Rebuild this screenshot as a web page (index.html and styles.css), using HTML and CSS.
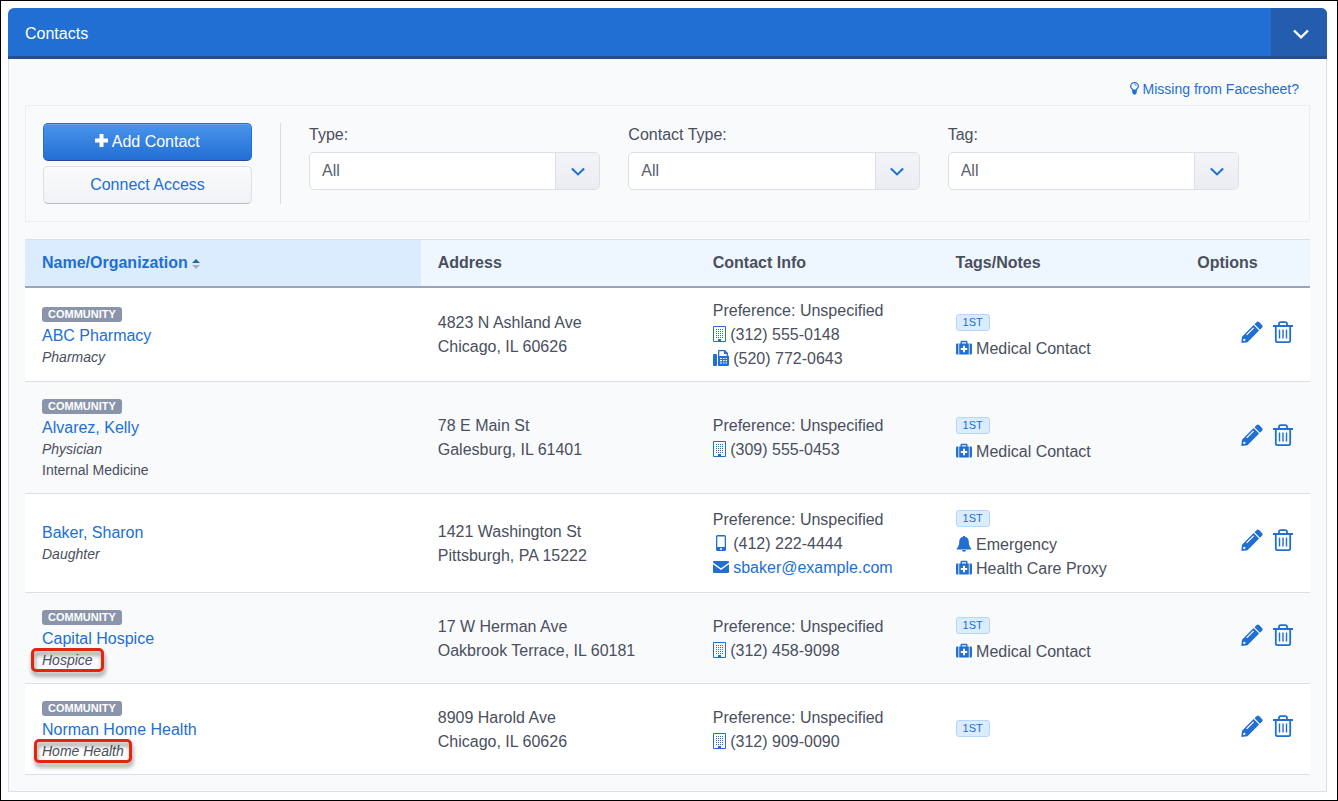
FILE: index.html
```html
<!DOCTYPE html>
<html lang="en">
  <head>
    <meta charset="utf-8" />
    <meta name="viewport" content="width=device-width, initial-scale=1.0" />
    <title>Contacts</title>
    <link rel="stylesheet" href="styles.css">
  </head>

  <body>
    <!-- icon set -->
    <svg class="sprite" aria-hidden="true">
      <symbol id="chevron" viewBox="0 0 16 10">
        <path d="M1 1.500 8 8.300l7-6.800" fill="none" stroke="currentColor" stroke-width="2.400" />
      </symbol>
      <symbol id="plus" viewBox="0 0 13 13">
        <path d="M4.500 0h4v4.500H13v4H8.500V13h-4V8.500H0v-4h4.500z" fill="currentColor" />
      </symbol>
      <symbol id="bulb" viewBox="0 0 9 13">
        <path d="M3 8.500C3 7 .6 6.400.6 4.300a3.900 3.700 0 0 1 7.800 0C8.400 6.400 6 7 6 8.500z" fill="none" stroke="currentColor" stroke-width="1.200" />
        <path d="M2.300 7.500h4.400v3.500l-1.200 1.500h-2l-1.200-1.500z" fill="currentColor" />
        <path d="M4.500 2.400c1 0 1.800.6 1.800 1.600" fill="none" stroke="currentColor" stroke-width=".8" />
      </symbol>
      <symbol id="building" viewBox="0 0 13 16">
        <path d="M.5.500h12v15H.5z" fill="none" stroke="currentColor" />
        <path d="M3 3.500h8M3 5.500h8M3 7.500h8M3 9.500h8M3 11.500h8" stroke="currentColor" stroke-dasharray="1 1" />
        <path d="M5 13h3v3H5z" fill="currentColor" />
      </symbol>
      <symbol id="fax" viewBox="0 0 16 16">
        <path d="M0 5a1 1 0 0 1 1-1h2a1 1 0 0 1 1 1v10a1 1 0 0 1-1 1H1a1 1 0 0 1-1-1z" fill="currentColor" />
        <path fill-rule="evenodd" d="M5 1a1 1 0 0 1 1-1h6l3 3v2.500a1.500 1.500 0 0 1 1 1.500v7.500a1.500 1.500 0 0 1-1.500 1.500H5zm1.300.300V6h7.400V4H11V1.300z" fill="currentColor" />
        <path d="M7 8.500h2M10 8.500h1.500M12.500 8.500H14M7 10.700h2M10 10.700h1.500M12.500 10.700H14M7 13h2M10 13h1.500M12.500 13H14" stroke="#fff" stroke-width="1.200" />
      </symbol>
      <symbol id="mobile" viewBox="0 0 16 16">
        <path fill-rule="evenodd" d="M3 1.500A1.500 1.500 0 0 1 4.500 0h7A1.500 1.500 0 0 1 13 1.500v13a1.500 1.500 0 0 1-1.500 1.500h-7A1.500 1.500 0 0 1 3 14.500zm1.300 0v10.500h7.400V1.500zM7 13.300v1.400h2v-1.400z" fill="currentColor" />
      </symbol>
      <symbol id="mail" viewBox="0 0 16 16">
        <path d="M1 2h14a1 1 0 0 1 1 1v.5L8 9.200 0 3.500V3a1 1 0 0 1 1-1z" fill="currentColor" />
        <path d="M0 5.200 8 11l8-5.800V13a1 1 0 0 1-1 1H1a1 1 0 0 1-1-1z" fill="currentColor" />
      </symbol>
      <symbol id="bell" viewBox="0 0 16 16">
        <path d="M7 .8a1 1 0 0 1 2 0c2.800.7 3.800 2.700 3.800 5.200 0 3.500 1 4.600 2.400 6.500v1H.8v-1C2.200 10.600 3.200 9.500 3.200 6 3.200 3.500 4.200 1.500 7 .8zM6 14h4a2 1.800 0 0 1-4 0z" fill="currentColor" />
      </symbol>
      <symbol id="medkit" viewBox="0 0 16 16">
        <path d="M1 3.500h1.400V14.500H1a1 1 0 0 1-1-1v-9a1 1 0 0 1 1-1zM15 3.500h-1.400V14.500H15a1 1 0 0 0 1-1v-9a1 1 0 0 0-1-1z" fill="currentColor" />
        <path fill-rule="evenodd" d="M3.200 3.500H4.500V2a1.200 1.200 0 0 1 1.200-1.200h4.600A1.200 1.200 0 0 1 11.500 2v1.500h1.300v11H3.200zm2.700 0h4.200V2.200H5.900zM7 5.800V8H4.800v2H7v2.200h2V10h2.200V8H9V5.800z" fill="currentColor" />
      </symbol>
      <symbol id="pencil" viewBox="0 0 22 22">
        <path d="M15.500 1.200a2 2 0 0 1 2.800 0l2.700 2.700a2 2 0 0 1 0 2.800l-2 2-5.500-5.500z" fill="currentColor" />
        <path fill-rule="evenodd" d="M12.600 4.100l5.500 5.500L6.500 21.200.3 21.900 1 15.700zM2.400 18l-.2 2 2-.2.300-1.300-.8-.7zM5.200 13.400l.9.900 7-7-.9-.9z" fill="currentColor" />
      </symbol>
      <symbol id="trash" viewBox="0 0 20 22">
        <path d="M0 5h20M6 5V3q0-1.800 1.800-1.800h4.400Q14 1.200 14 3v2M2.800 5v14.500q0 1.600 1.600 1.600h11.200q1.600 0 1.600-1.600V5" fill="none" stroke="currentColor" stroke-width="1.800" />
        <path d="M6.500 8.500v9M10 8.500v9M13.500 8.500v9" stroke="currentColor" stroke-width="1.400" />
      </symbol>
      <symbol id="sort" viewBox="0 0 8 10">
        <path d="M0 4l4-4 4 4z" fill="#1b6d9c" />
        <path d="M0 6h8l-4 4z" fill="#a9adb5" />
      </symbol>
    </svg>

    <section class="card">
      <header class="card-header">
        <h1>Contacts</h1>
        <button type="button" class="toggle" aria-label="Collapse">
          <svg width="16" height="10"><use href="#chevron" /></svg>
        </button>
      </header>

      <div class="card-body">
        <div class="hint">
          <a href="#"><svg width="9" height="13"><use href="#bulb" /></svg> Missing from Facesheet?</a>
        </div>

        <form class="filters">
          <div class="actions">
            <button type="button" class="btn btn-primary"><svg width="13" height="13"><use href="#plus" /></svg> Add Contact</button>
            <button type="button" class="btn">Connect Access</button>
          </div>
          <div class="fields">
            <div class="field">
              <label for="type">Type:</label>
              <div class="select">
                <select id="type"><option>All</option></select>
                <span class="arrow"><svg width="14" height="9"><use href="#chevron" /></svg></span>
              </div>
            </div>
            <div class="field">
              <label for="contact-type">Contact Type:</label>
              <div class="select">
                <select id="contact-type"><option>All</option></select>
                <span class="arrow"><svg width="14" height="9"><use href="#chevron" /></svg></span>
              </div>
            </div>
            <div class="field">
              <label for="tag">Tag:</label>
              <div class="select">
                <select id="tag"><option>All</option></select>
                <span class="arrow"><svg width="14" height="9"><use href="#chevron" /></svg></span>
              </div>
            </div>
          </div>
        </form>

        <table class="contacts">
          <thead>
            <tr>
              <th class="col-name sorted">Name/Organization <svg width="8" height="10"><use href="#sort" /></svg></th>
              <th class="col-address">Address</th>
              <th class="col-info">Contact Info</th>
              <th class="col-tags">Tags/Notes</th>
              <th class="col-options">Options</th>
            </tr>
          </thead>
          <tbody>
            <tr>
              <td class="name">
                <div><span class="badge">COMMUNITY</span></div>
                <div><a href="#">ABC Pharmacy</a></div>
                <div class="role">Pharmacy</div>
              </td>
              <td>4823 N Ashland Ave<br>Chicago, IL 60626</td>
              <td>
                <div>Preference: Unspecified</div>
                <div><svg width="13" height="16"><use href="#building" /></svg> (312) 555-0148</div>
                <div><svg width="16" height="16"><use href="#fax" /></svg> (520) 772-0643</div>
              </td>
              <td class="tags">
                <div class="tag-row"><span class="tag">1ST</span></div>
                <div><svg width="16" height="16"><use href="#medkit" /></svg> Medical Contact</div>
              </td>
              <td class="options">
                <button type="button" aria-label="Edit"><svg width="22" height="22"><use href="#pencil" /></svg></button>
                <button type="button" aria-label="Delete"><svg width="20" height="22"><use href="#trash" /></svg></button>
              </td>
            </tr>
            <tr>
              <td class="name">
                <div><span class="badge">COMMUNITY</span></div>
                <div><a href="#">Alvarez, Kelly</a></div>
                <div class="role">Physician</div>
                <div class="specialty">Internal Medicine</div>
              </td>
              <td>78 E Main St<br>Galesburg, IL 61401</td>
              <td>
                <div>Preference: Unspecified</div>
                <div><svg width="13" height="16"><use href="#building" /></svg> (309) 555-0453</div>
              </td>
              <td class="tags">
                <div class="tag-row"><span class="tag">1ST</span></div>
                <div><svg width="16" height="16"><use href="#medkit" /></svg> Medical Contact</div>
              </td>
              <td class="options">
                <button type="button" aria-label="Edit"><svg width="22" height="22"><use href="#pencil" /></svg></button>
                <button type="button" aria-label="Delete"><svg width="20" height="22"><use href="#trash" /></svg></button>
              </td>
            </tr>
            <tr>
              <td class="name">
                <div><a href="#">Baker, Sharon</a></div>
                <div class="role">Daughter</div>
              </td>
              <td>1421 Washington St<br>Pittsburgh, PA 15222</td>
              <td>
                <div>Preference: Unspecified</div>
                <div><svg width="16" height="16"><use href="#mobile" /></svg> (412) 222-4444</div>
                <div><a href="#"><svg width="16" height="16"><use href="#mail" /></svg> sbaker@example.com</a></div>
              </td>
              <td class="tags">
                <div class="tag-row"><span class="tag">1ST</span></div>
                <div><svg width="16" height="16"><use href="#bell" /></svg> Emergency</div>
                <div><svg width="16" height="16"><use href="#medkit" /></svg> Health Care Proxy</div>
              </td>
              <td class="options">
                <button type="button" aria-label="Edit"><svg width="22" height="22"><use href="#pencil" /></svg></button>
                <button type="button" aria-label="Delete"><svg width="20" height="22"><use href="#trash" /></svg></button>
              </td>
            </tr>
            <tr>
              <td class="name">
                <div><span class="badge">COMMUNITY</span></div>
                <div><a href="#">Capital Hospice</a></div>
                <div class="role"><span class="marked marked-wide">Hospice</span></div>
              </td>
              <td>17 W Herman Ave<br>Oakbrook Terrace, IL 60181</td>
              <td>
                <div>Preference: Unspecified</div>
                <div><svg width="13" height="16"><use href="#building" /></svg> (312) 458-9098</div>
              </td>
              <td class="tags">
                <div class="tag-row"><span class="tag">1ST</span></div>
                <div><svg width="16" height="16"><use href="#medkit" /></svg> Medical Contact</div>
              </td>
              <td class="options">
                <button type="button" aria-label="Edit"><svg width="22" height="22"><use href="#pencil" /></svg></button>
                <button type="button" aria-label="Delete"><svg width="20" height="22"><use href="#trash" /></svg></button>
              </td>
            </tr>
            <tr>
              <td class="name">
                <div><span class="badge">COMMUNITY</span></div>
                <div><a href="#">Norman Home Health</a></div>
                <div class="role"><span class="marked">Home Health</span></div>
              </td>
              <td>8909 Harold Ave<br>Chicago, IL 60626</td>
              <td>
                <div>Preference: Unspecified</div>
                <div><svg width="13" height="16"><use href="#building" /></svg> (312) 909-0090</div>
              </td>
              <td class="tags">
                <div class="tag-row"><span class="tag">1ST</span></div>
              </td>
              <td class="options">
                <button type="button" aria-label="Edit"><svg width="22" height="22"><use href="#pencil" /></svg></button>
                <button type="button" aria-label="Delete"><svg width="20" height="22"><use href="#trash" /></svg></button>
              </td>
            </tr>
          </tbody>
        </table>
      </div>
    </section>
  </body>
</html>
```
FILE: styles.css
```css
* {
  box-sizing: border-box;
}

body {
  margin: 0;
  min-height: 100vh;
  padding: 7px 10px 8px 7px;
  border: 1px solid #000;
  background: #fff;
  color: #4a4f5c;
  font-family: "Liberation Sans", Arial, sans-serif;
  font-size: 16px;
  line-height: 24px;
}

button,
select {
  font: inherit;
  cursor: pointer;
}

a {
  color: #216fd3;
  text-decoration: none;
}

.sprite {
  position: absolute;
  width: 0;
  height: 0;
}

/* card */
.card-header {
  display: flex;
  justify-content: space-between;
  height: 51px;
  padding-left: 17px;
  border-bottom: 3px solid #254e92;
  border-radius: 6px 6px 0 0;
  background: #216fd3;
  color: #fff;
  overflow: hidden;
}

.card-header h1 {
  margin: 0;
  font-size: 16px;
  font-weight: normal;
  line-height: 52px;
}

.toggle {
  display: flex;
  align-items: center;
  justify-content: center;
  width: 56px;
  padding: 4px 0 0 4px;
  border: 0;
  background: #255dae;
  color: #fff;
}

.card-body {
  padding: 20px 16px 16px;
  border: 1px solid #dcdfe6;
  border-top: 0;
  background: #f9fafc;
}

.hint {
  margin-bottom: 6px;
  padding-right: 11px;
  font-size: 14px;
  line-height: 20px;
  text-align: right;
}

.hint svg {
  vertical-align: -1px;
}

/* filters */
.filters {
  display: flex;
  padding: 17px 70px 17px 17px;
  border: 1px solid #eceef2;
}

.actions {
  display: flex;
  flex-direction: column;
  gap: 5px;
  padding-right: 28px;
  border-right: 1px solid #d9dce4;
}

.btn {
  width: 209px;
  height: 38px;
  padding: 0;
  border: 1px solid #dcdfe6;
  border-bottom-color: #b4bac8;
  border-radius: 5px;
  background: linear-gradient(#fafbfc, #f1f2f6);
  color: #216fd3;
}

.btn-primary {
  border-color: #216fd3;
  border-bottom-color: #254e92;
  background: linear-gradient(#4a94ec, #216fd3);
  box-shadow: inset 0 1px 0 #69a6ef;
  color: #fff;
}

.fields {
  flex: 1;
  display: grid;
  grid-template-columns: repeat(3, 1fr);
  gap: 28px;
  padding-left: 28px;
}

.field label {
  display: block;
  margin-bottom: 5px;
}

.select {
  position: relative;
  height: 38px;
}

.select select {
  appearance: none;
  width: 100%;
  height: 100%;
  padding: 0 56px 0 12px;
  border: 1px solid #dcdfe6;
  border-radius: 5px;
  background: #fff;
  color: #5b606e;
}

.arrow {
  position: absolute;
  top: 1px;
  right: 1px;
  bottom: 1px;
  display: flex;
  align-items: center;
  justify-content: center;
  width: 44px;
  border-left: 1px solid #dcdfe6;
  border-radius: 0 4px 4px 0;
  background: linear-gradient(#f3f4f8, #eaedf2);
  color: #216fd3;
  pointer-events: none;
}

/* table */
.contacts {
  width: 100%;
  margin-top: 17px;
  border-spacing: 0;
  table-layout: fixed;
}

.contacts th {
  height: 49px;
  padding: 0 17px;
  border-top: 1px solid #dcdfe6;
  border-bottom: 2px solid #9ca4b8;
  background: #eef7ff;
  text-align: left;
}

.contacts .sorted {
  background: #daecfd;
  color: #216fd3;
}

.sorted svg {
  vertical-align: -1px;
}

.col-name {
  width: 30.8%;
}

.col-address {
  width: 21.4%;
}

.col-info {
  width: 18.9%;
}

.col-options {
  width: 10.1%;
}

.contacts td {
  padding: 11px 17px 10px;
  border-bottom: 1px solid #dcdfe6;
  vertical-align: middle;
}

.contacts tbody tr:nth-child(odd) {
  background: #fff;
}

.contacts .name {
  padding-top: 13px;
  padding-bottom: 12px;
}

.contacts .tags {
  padding-top: 12px;
  padding-bottom: 11px;
}

.name div {
  height: 22px;
  line-height: 22px;
}

.contacts td svg {
  color: #216fd3;
  vertical-align: -2px;
}

.badge {
  display: inline-block;
  padding: 0 6px;
  border-radius: 3px;
  background: #8a94aa;
  color: #fff;
  font-size: 11px;
  font-weight: bold;
  line-height: 15px;
  vertical-align: 1px;
}

.name .role,
.name .specialty {
  height: 21px;
  font-size: 14px;
  line-height: 21px;
}

.role {
  font-style: italic;
}

.tag-row {
  height: 27px;
}

.tag {
  display: inline-block;
  padding: 0 6px;
  border: 1px solid #b3d6fa;
  border-radius: 3px;
  background: #daecfd;
  color: #216fd3;
  font-size: 11px;
  line-height: 15px;
  vertical-align: 1px;
}

.contacts .options {
  padding-bottom: 12px;
  text-align: right;
  white-space: nowrap;
}

.options button {
  margin-left: 6px;
  padding: 0;
  border: 0;
  background: none;
}

/* red outline around a role */
.marked {
  position: relative;
}

.marked::after {
  content: "";
  position: absolute;
  inset: -4px -8px;
  border: 3px solid #e0260b;
  border-radius: 5px;
  filter: drop-shadow(1px 4px 2px rgba(0, 0, 0, 0.45));
}

.marked-wide::after {
  inset: -4px -11px;
}
```
